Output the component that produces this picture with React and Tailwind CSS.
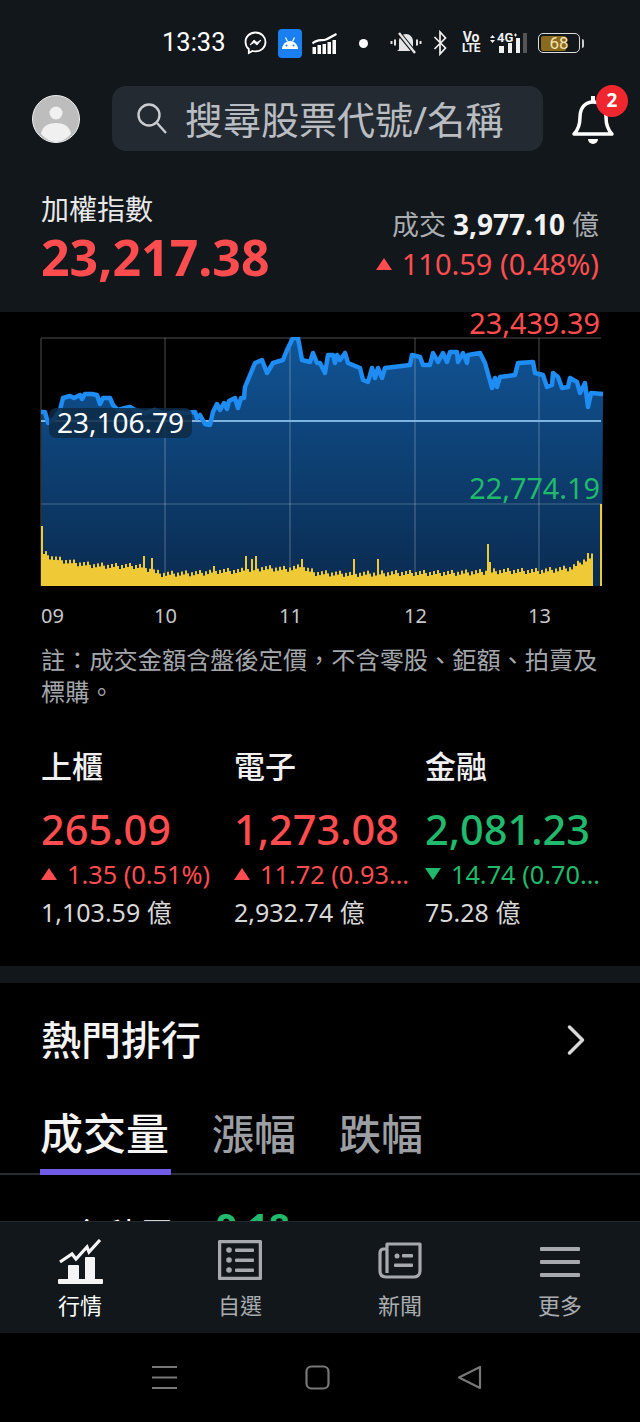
import { ChevronRight } from 'lucide-react'

const CJK = "font-['Noto_Sans','Noto_Sans_CJK_TC',sans-serif]"

// line of the index, in page coordinates (chart origin 40,337)
const linePoints = [
  [41,412],[45,412],[48,423],[55,418],[60,410],[63,398],[70,396],[74,398],[80,395],[82,399],[85,394],[92,394],[97,395],[100,404],[103,398],[110,398],[113,405],
  [118,410],[125,408],[130,407],[135,410],[145,413],[155,410],[165,414],[175,412],[185,413],[195,412],[197,418],[200,415],[205,424],[210,425],[213,412],[217,404],
  [220,410],[224,403],[227,409],[229,401],[235,398],[238,408],[241,398],[244,398],[245,387],[250,375],[255,363],[262,360],[267,373],[273,363],[283,360],[287,350],
  [293,338],[298,338],[302,360],[310,362],[313,353],[317,363],[320,363],[325,373],[328,355],[333,355],[335,363],[337,355],[340,360],[345,353],[348,363],[360,368],
  [363,380],[368,382],[372,368],[375,378],[378,368],[382,378],[385,368],[410,365],[412,355],[420,357],[423,365],[430,365],[433,353],[438,362],[443,353],[447,362],
  [450,352],[457,352],[458,362],[463,353],[467,363],[468,355],[480,353],[485,363],[492,388],[495,378],[497,387],[500,377],[515,375],[518,363],[533,362],[535,373],
  [543,375],[547,387],[552,385],[553,373],[558,377],[562,388],[568,387],[570,378],[577,382],[580,393],[585,383],[588,407],[591,393],[603,394],
]

const toChart = (pts) => pts.map(([x, y]) => `${x - 40},${y - 337}`).join(' ')

const volumeAnchors = [
  [41,57],[43,32],[50,28],[60,25],[75,22],[90,20],[110,19],[140,19],[152,14],[160,11],[200,12],[215,14],[240,14],[262,17],[285,16],[300,18],[315,12],[350,11],[400,12],
  [450,12],[480,13],[500,14],[540,14],[570,17],[580,23],[592,29],
]
const spikes = { 143: 30, 151: 28, 213: 20, 245: 30, 251: 27, 255: 30, 301: 27, 353: 27, 377: 27, 487: 42, 489: 24, 587: 33 }

const volumeAt = (x) => {
  if (spikes[x]) return spikes[x]
  let i = 0
  while (i < volumeAnchors.length - 2 && volumeAnchors[i + 1][0] < x) i++
  const [x0, h0] = volumeAnchors[i]
  const [x1, h1] = volumeAnchors[i + 1]
  const h = h0 + ((h1 - h0) * (x - x0)) / (x1 - x0)
  return h + ((x * 37) % 7) - 2
}

const volumeBars = []
for (let x = 41; x <= 591; x += 2) volumeBars.push({ x, h: volumeAt(x) })

const MarketChart = () => (
  <svg width="564" height="252" viewBox="0 0 564 252" className="block">
    <defs>
      <linearGradient id="area" x1="0" y1="0" x2="0" y2="1">
        <stop offset="0" stopColor="#115495" />
        <stop offset="1" stopColor="#0a2b50" />
      </linearGradient>
    </defs>
    <polygon points={`1,249 ${toChart(linePoints)} 562,249`} fill="url(#area)" />
    <path d="M1 1H561M1 1V249" stroke="#333" strokeWidth="1.5" fill="none" />
    <path d="M125 1V249M250 1V249M375 1V249M499 1V249" stroke="#fff" strokeOpacity="0.2" strokeWidth="1.5" />
    <path d="M1 167H561" stroke="#fff" strokeOpacity="0.16" strokeWidth="1.5" />
    <path d="M1 84H561" stroke="#7fb4e2" strokeWidth="2" />
    <polyline points={toChart(linePoints)} fill="none" stroke="#1e8cf2" strokeWidth="4.5" strokeLinejoin="round" />
    {volumeBars.map((b) => (
      <rect key={b.x} x={b.x - 40} y={249 - b.h} width="2" height={b.h} fill="#f0c936" />
    ))}
    <rect x="1" y="247.5" width="552" height="1.5" fill="#f0c936" />
    <rect x="560" y="167" width="2" height="82" fill="#f0c936" />
  </svg>
)

const TriUp = ({ size = 16, className = 'fill-[#ff4d4f]' }) => (
  <svg width={size} height={size * 0.75} viewBox="0 0 16 12" className={className}><path d="M8 0l8 12H0z" /></svg>
)
const TriDown = ({ size = 16 }) => (
  <svg width={size} height={size * 0.75} viewBox="0 0 16 12" className="fill-[#21b96b]"><path d="M8 12L0 0h16z" /></svg>
)

const StatusBar = () => (
  <div className="h-[86px] pl-[162px] flex items-center text-white">
    <span className="w-[62px] text-[25.5px] font-['Roboto',sans-serif] leading-none">13:33</span>
    <svg width="23" height="24" viewBox="0 0 23 24" className="ml-[20px]" fill="none">
      <path d="M11.5 1.5C5.6 1.5 1.5 5.7 1.5 11c0 3 1.3 5.4 3.3 7v4l3.6-2c1 .3 2 .4 3.1.4 5.9 0 10-4.2 10-9.4s-4.1-9.500-10-9.500z" stroke="#fff" strokeWidth="1.8" />
      <path d="M6 14l4-5 3 2.5 4-2.5-4 5-3-2.500z" fill="#fff" stroke="#fff" strokeWidth="0.8" />
    </svg>
    <div className="ml-[11px] w-[24px] h-[29px] bg-[#1a7ff0] rounded-[4px] flex items-center justify-center">
      <svg width="20" height="14" viewBox="0 0 20 14" fill="#fff">
        <path d="M2 13c0-4 3.500-8 8-8s8 4 8 8z" />
        <path d="M5.500 1.500l2 4M14.500 1.500l-2 4" stroke="#fff" strokeWidth="1.2" />
        <circle cx="6.500" cy="9.500" r="1" fill="#1a7ff0" /><circle cx="13.500" cy="9.500" r="1" fill="#1a7ff0" />
      </svg>
    </div>
    <svg width="25" height="21" viewBox="0 0 25 21" className="ml-[10px]" fill="#fff">
      <rect x="0.5" y="14" width="3.5" height="7" /><rect x="5.5" y="12" width="3.5" height="9" /><rect x="10.5" y="11" width="3.5" height="10" /><rect x="15.5" y="9" width="3.5" height="12" /><rect x="20.5" y="7" width="3.5" height="14" />
      <path d="M0.500 10.500C5 6 10 8 14 6.500S20 3 24.500 1" fill="none" stroke="#fff" strokeWidth="2.2" />
    </svg>
    <div className="ml-[22px] w-[9px] h-[9px] rounded-full bg-white" />
    <svg width="32" height="24" viewBox="0 0 32 24" className="ml-[22px]" fill="none">
      <path d="M9 18.500V10c0-3.500 3-7 7-7s7 3.500 7 7v8.500l2 1.500H7z" fill="#e5e5e5" />
      <path d="M8 1l17 21" stroke="#12171b" strokeWidth="4.5" />
      <path d="M9 2l16 20" stroke="#e5e5e5" strokeWidth="2.4" />
      <path d="M1.500 10v3M5 8.500v6M27 8.500v6M30.500 10v3" stroke="#e5e5e5" strokeWidth="2" />
    </svg>
    <svg width="15" height="26" viewBox="0 0 15 26" className="ml-[11px]" fill="none">
      <path d="M1.500 7l11 11-5.500 6V2l5.500 6-11 11" stroke="#f0f0f0" strokeWidth="1.7" />
    </svg>
    <div className="ml-[15px] w-[16px] flex flex-col items-center text-[#f0f0f0] font-bold text-[14px] leading-[11px] font-['Roboto',sans-serif]">
      <span>Vo</span><span className="text-[12px] tracking-[-0.5px]">LTE</span>
    </div>
    <div className="ml-[9px] w-[33px] h-[21px] relative">
      <svg width="33" height="21" viewBox="0 0 33 21" fill="#f0f0f0" className="block">
        <path d="M2 5l2.500-3L7 5zM2 7l2.500 3L7 7z" />
        <path d="M26 2h3M27.500 .5v3" stroke="#f0f0f0" strokeWidth="1" />
        <rect x="11" y="13" width="5" height="7" /><rect x="20" y="10" width="4" height="10" /><rect x="28" y="5" width="4" height="15" />
      </svg>
      <span className="absolute left-[9px] top-[-3px] text-[13px] font-bold leading-[15px] text-[#f0f0f0] font-['Roboto',sans-serif]">4G</span>
    </div>
    <div className="ml-[2px] w-[4px] h-[20px] bg-[#555]" />
    <div className="ml-[11px] w-[42px] h-[20px] rounded-[5px] border-[1.5px] border-[#ddd] p-[1.5px] relative">
      <div className="w-[68%] h-full bg-[#8a6a1c] rounded-[2px]" />
      <span className="absolute inset-0 flex items-center justify-center text-[17px] text-[#f4e3b0] font-['Roboto',sans-serif] leading-none">68</span>
    </div>
    <div className="ml-[2px] w-[2px] h-[9px] bg-[#ccc] rounded-r" />
  </div>
)

const SearchRow = () => (
  <div className="h-[65px] flex items-center pl-[32px]">
    <svg width="48" height="48" viewBox="0 0 48 48">
      <circle cx="24" cy="24" r="23.5" fill="#bdbdbd" stroke="#eee" strokeWidth="1" />
      <circle cx="24" cy="18" r="6.5" fill="#f0f0f0" />
      <path d="M9 39c1-8 8-11 15-11s14 3 15 11c-4 4-9 8-15 8s-11-4-15-8z" fill="#f0f0f0" />
    </svg>
    <div className="ml-[32px] w-[431px] h-[65px] rounded-[14px] bg-[#232a31] flex items-center pl-[25px]">
      <svg width="30" height="34" viewBox="0 0 30 34" fill="none" stroke="#c9ccd0" strokeWidth="2.4">
        <circle cx="12" cy="13" r="10.5" />
        <path d="M20 21l9 10" />
      </svg>
      <span className={`ml-[18px] text-[38px] leading-none text-[#b9bdc2] whitespace-nowrap ${CJK}`}>搜尋股票代號/名稱</span>
    </div>
    <div className="ml-[28px] w-[44px] h-[64px] relative">
      <svg width="44" height="60" viewBox="0 0 44 60" fill="none" className="absolute left-0 top-[3px]">
        <path d="M3 44c4-4 6-8 6-17s5-15 13-15 13 6 13 15 2 13 6 17z" stroke="#fff" strokeWidth="3.5" strokeLinejoin="round" />
        <path d="M22 6v6" stroke="#fff" strokeWidth="4" />
        <path d="M17 49a5 5 0 0 0 10 0z" fill="#fff" />
      </svg>
      <span className="absolute left-[25px] top-[-2px] w-[32px] h-[32px] rounded-full bg-[#f0262f] text-white text-[19px] font-bold flex items-center justify-center font-['Noto_Sans',sans-serif]">2</span>
    </div>
  </div>
)

const IndexSummary = () => (
  <div className={`flex justify-between pl-[41px] pr-[41px] pt-[38px] ${CJK}`}>
    <div>
      <div className="text-[28px] leading-[40px] text-[#e8e8e8]">加權指數</div>
      <div className="text-[50px] leading-[58px] font-bold text-[#ff4d4f] -mt-[1px]">23,217.38</div>
    </div>
    <div className="flex flex-col items-end pt-[17px]">
      <div className="text-[27px] leading-[36px] text-[#a9adb1] flex items-baseline gap-[7px]">
        <span>成交</span><span className="font-bold text-[28px] text-[#f2f2f2]">3,977.10</span><span>億</span>
      </div>
      <div className="mt-[1px] flex items-center text-[29px] leading-[40px] text-[#ff4d4f] whitespace-nowrap">
        <TriUp /><span className="ml-[10px]">110.59 (0.48%)</span>
      </div>
    </div>
  </div>
)

const sectors = [
  { name: '上櫃', value: '265.09', change: '1.35 (0.51%)', volume: '1,103.59 億', up: true, width: 'w-[193px]' },
  { name: '電子', value: '1,273.08', change: '11.72 (0.93%)', volume: '2,932.74 億', up: true, width: 'w-[191px]' },
  { name: '金融', value: '2,081.23', change: '14.74 (0.70%)', volume: '75.28 億', up: false, width: 'w-[175px]' },
]

const SectorCol = ({ s }) => (
  <div className={`${s.width} shrink-0 ${CJK}`}>
    <div className="text-[31px] leading-[44px] text-[#f0f0f0] font-medium">{s.name}</div>
    <div className={`mt-[16px] text-[41.5px] leading-[50px] font-medium ${s.up ? 'text-[#ff4d4f]' : 'text-[#21b96b]'}`}>{s.value}</div>
    <div className={`mt-[2px] flex items-center text-[25.3px] leading-[36px] ${s.up ? 'text-[#ff4d4f]' : 'text-[#21b96b]'}`}>
      {s.up ? <TriUp /> : <TriDown />}
      <span className="ml-[10px] w-[150px] truncate">{s.change}</span>
    </div>
    <div className="mt-[2px] text-[25px] leading-[36px] text-[#d8d8d8]">{s.volume}</div>
  </div>
)

const NavItem = ({ label, active, children }) => (
  <div className="w-[160px] flex flex-col items-center shrink-0">
    <div className="h-[52px] flex items-end">{children}</div>
    <span className={`mt-[5px] text-[22px] leading-[32px] ${active ? 'text-white' : 'text-[#a9adb1]'} ${CJK}`}>{label}</span>
  </div>
)

const BottomNav = () => (
  <div className="h-[112px] shrink-0 bg-[#12171b] border-t border-[#23282c] flex pt-[10px]">
    <NavItem label="行情" active>
      <svg width="45" height="45" viewBox="0 0 45 45" fill="#f4f4f4">
        <path d="M2 23L14 15l4 5L29 8l2 5L42 1" fill="none" stroke="#f4f4f4" strokeWidth="3.2" />
        <rect x="10" y="26" width="11" height="15" rx="1" /><rect x="27" y="18" width="10" height="23" rx="1" /><rect x="0" y="40" width="45" height="5" rx="1" />
      </svg>
    </NavItem>
    <NavItem label="自選">
      <svg width="44" height="40" viewBox="0 0 44 40" fill="none" className="mb-[4px]">
        <rect x="1.5" y="1.5" width="41" height="37" stroke="#a6aaae" strokeWidth="3.5" rx="1" />
        <g fill="#a6aaae">
          <circle cx="11" cy="10" r="2.8" /><circle cx="11" cy="20" r="2.8" /><circle cx="11" cy="30" r="2.8" />
          <rect x="17" y="8.5" width="19" height="3.5" rx="1" /><rect x="17" y="18.5" width="19" height="3.5" rx="1" /><rect x="17" y="28.5" width="19" height="3.5" rx="1" />
        </g>
      </svg>
    </NavItem>
    <NavItem label="新聞">
      <svg width="44" height="37" viewBox="0 0 44 37" fill="none" className="mb-[5px]">
        <path d="M9 6V2h33v27c0 4-3 6-6 6H8c-4 0-6-2-6-6V11c0-3 2-4 4-4h3v24" stroke="#a6aaae" strokeWidth="3.2" strokeLinejoin="round" />
        <g fill="#a6aaae">
          <circle cx="19" cy="14" r="2.5" /><rect x="24" y="12" width="11" height="3.500" rx="1" /><rect x="16" y="21.5" width="19" height="3.500" rx="1" />
        </g>
      </svg>
    </NavItem>
    <NavItem label="更多">
      <svg width="40" height="30" viewBox="0 0 40 30" fill="#a6aaae" className="mb-[7px]">
        <rect y="0" width="40" height="4" rx="1" /><rect y="13" width="40" height="4" rx="1" /><rect y="26" width="40" height="4" rx="1" />
      </svg>
    </NavItem>
  </div>
)

const AndroidNav = () => (
  <div className="h-[89px] shrink-0 bg-black flex items-center pl-[152px]">
    <svg width="25" height="25" viewBox="0 0 25 25" stroke="#777" strokeWidth="2.2"><path d="M0 2h25M0 12.500h25M0 23h25" /></svg>
    <svg width="25" height="25" viewBox="0 0 25 25" fill="none" stroke="#777" strokeWidth="2.2" className="ml-[128px]"><rect x="1.5" y="1.5" width="22" height="22" rx="5" /></svg>
    <svg width="25" height="25" viewBox="0 0 25 25" fill="none" stroke="#777" strokeWidth="2.2" strokeLinejoin="round" className="ml-[127px]"><path d="M23 2v21L2 12.500z" /></svg>
  </div>
)

export default function App() {
  return (
    <div className={`w-[640px] h-[1422px] bg-black flex flex-col overflow-hidden ${CJK}`}>
      {/* Header */}
      <div className="h-[312px] shrink-0 bg-[#12171b]">
        <StatusBar />
        <SearchRow />
        <IndexSummary />
      </div>

      <div className="flex-1 overflow-hidden min-h-0">
        {/* Chart */}
        <div className="relative mt-[25px] ml-[40px] w-[564px] h-[252px]">
          <MarketChart />
          <span className="absolute right-[4px] top-[-29px] text-[28.8px] leading-[30px] text-[#ff4d4f]">23,439.39</span>
          <span className="absolute right-[4px] top-[136px] text-[28.8px] leading-[30px] text-[#21b96b]">22,774.19</span>
          <span className="absolute left-[9px] top-[71px] h-[30px] px-[8px] rounded-[7px] bg-[#0e2a45]/85 text-[28px] leading-[28px] text-white">23,106.79</span>
        </div>
        <div className="flex pl-[41px] mt-[13px] text-[#c8c8c8] text-[20px] leading-[28px]">
          <span className="w-[113px]">09</span>
          <span className="w-[125px]">10</span>
          <span className="w-[125px]">11</span>
          <span className="w-[124px]">12</span>
          <span>13</span>
        </div>

        <p className="ml-[41px] w-[566px] mt-[14px] text-[24.2px] leading-[32px] text-[#a3a7ab]">
          {'註\uFF1A成交金額含盤後定價\uFF0C不含零股、鉅額、拍賣及標購。'}
        </p>

        {/* Sectors */}
        <div className="flex pl-[41px] mt-[36px]">
          {sectors.map((s) => <SectorCol key={s.name} s={s} />)}
        </div>

        <div className="h-[17px] bg-[#12171b] mt-[36px]" />

        {/* Hot ranking */}
        <div className="flex items-center justify-between pl-[41px] pr-[38px] mt-[27px] h-[60px]">
          <span className="text-[40px] leading-[60px] text-[#f4f4f4] font-medium">熱門排行</span>
          <ChevronRight size={52} strokeWidth={1.6} className="text-[#d8d8d8]" />
        </div>
        <div className="mt-[43px] h-[62px] flex pl-[40px] border-b-[2px] border-[#2a2d30]">
          <div className="h-[62px] w-[131px] border-b-[6px] border-[#6f5ce6] text-[43px] leading-[42px] text-[#f4f4f4] font-medium">成交量</div>
          <div className="ml-[41px] text-[42px] leading-[42px] text-[#9b9ea2] font-medium">漲幅</div>
          <div className="ml-[43px] text-[42px] leading-[42px] text-[#9b9ea2] font-medium">跌幅</div>
        </div>
        <div className="flex pl-[72px] mt-[37px] text-[34px] leading-[40px]">
          <span className="text-white w-[144px] mt-[3px]">台積電</span>
          <span className="text-[#21b96b] font-bold -mt-[5px] text-[37px]">9.18</span>
        </div>
      </div>

      <BottomNav />
      <AndroidNav />
    </div>
  )
}
